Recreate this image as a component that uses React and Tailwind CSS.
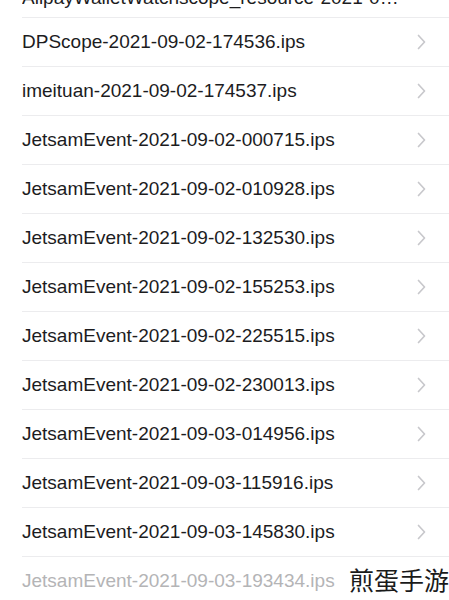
import React from "react";

const files = [
  "DPScope-2021-09-02-174536.ips",
  "imeituan-2021-09-02-174537.ips",
  "JetsamEvent-2021-09-02-000715.ips",
  "JetsamEvent-2021-09-02-010928.ips",
  "JetsamEvent-2021-09-02-132530.ips",
  "JetsamEvent-2021-09-02-155253.ips",
  "JetsamEvent-2021-09-02-225515.ips",
  "JetsamEvent-2021-09-02-230013.ips",
  "JetsamEvent-2021-09-03-014956.ips",
  "JetsamEvent-2021-09-03-115916.ips",
  "JetsamEvent-2021-09-03-145830.ips",
];

const Chevron = () => (
  <svg width="9" height="16" viewBox="0 0 9 16" fill="none" className="shrink-0">
    <path d="M1.5 1.5L7.5 8L1.5 14.5" stroke="#c8c8cc" strokeWidth="1.7" strokeLinecap="round" strokeLinejoin="round" />
  </svg>
);

const Row = ({ name }) => (
  <div className="h-[49px] border-b border-[#ececee] flex items-center justify-between pr-[23px]">
    <span className="text-[19px] text-[#1c1c1e] truncate">{name}</span>
    <Chevron />
  </div>
);

const App = () => {
  return (
    <div className="w-[449px] h-[600px] overflow-hidden bg-white" style={{ fontFamily: '"Liberation Sans", Arial, sans-serif' }}>
      <div className="-mt-[31px] pl-[22px]">
        <div className="h-[49px] pt-[10px] border-b border-[#ececee] flex items-center pr-[44px]">
          <span className="text-[19px] text-[#1c1c1e] truncate">
            AlipayWalletWatchscope_resource-2021-09-02-174412.ips
          </span>
        </div>
        {files.map((f) => (
          <Row key={f} name={f} />
        ))}
        <div className="relative h-[49px] flex items-center">
          <span className="text-[19px] text-[#b4b4b6]">JetsamEvent-2021-09-03-193434.ips</span>
          <span
            className="absolute right-0 top-[10px] bg-white pl-[4px] text-[25px] leading-none text-[#1a1a1a]"
            style={{ fontFamily: '"Noto Sans CJK SC", sans-serif' }}
          >
            煎蛋手游
          </span>
        </div>
      </div>
    </div>
  );
};

export default App;
